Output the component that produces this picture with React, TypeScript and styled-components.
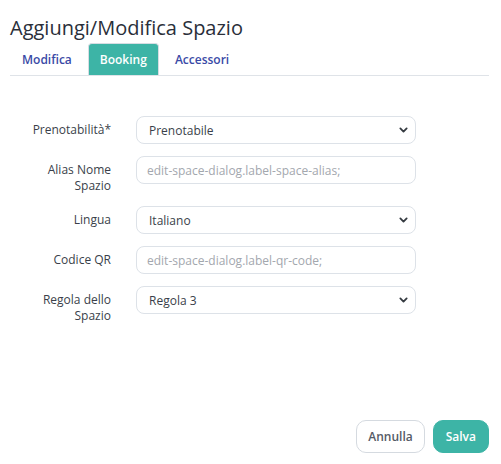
import React from "react";
import styled, { createGlobalStyle } from "styled-components";

const GlobalStyle = createGlobalStyle`
  body {
    margin: 0;
    background: #ffffff;
    font-family: "Open Sans", "Noto Sans", sans-serif;
  }
`;

const Dialog = styled.div`
  height: 464px;
  box-sizing: border-box;
  padding: 14px 12px 11px 10px;
  display: flex;
  flex-direction: column;
`;

const Title = styled.h1`
  margin: 0;
  font-size: 20px;
  line-height: 28px;
  font-weight: 500;
  color: #2a2f3a;
`;

const TabBar = styled.div`
  display: flex;
  gap: 4px;
  padding-left: 0;
  margin-top: 1px;
  border-bottom: 1px solid #dfe3e8;
`;

const Tab = styled.button<{ $active?: boolean }>`
  height: 32px;
  padding: 0 11px;
  border: 1px solid ${p => (p.$active ? "#d7dde3" : "transparent")};
  border-bottom: none;
  border-radius: 4px 4px 0 0;
  background: ${p => (p.$active ? "#3db4a6" : "transparent")};
  color: ${p => (p.$active ? "#ffffff" : "#3a4aa6")};
  font-family: inherit;
  font-size: 12px;
  font-weight: 600;
  cursor: pointer;
`;

const Form = styled.div`
  display: flex;
  flex-direction: column;
  gap: 12px;
  margin-top: 40px;
`;

const Row = styled.div`
  display: grid;
  grid-template-columns: 101px 280px;
  column-gap: 25px;
  align-items: start;
`;

const Label = styled.label`
  padding-top: 6px;
  text-align: right;
  font-size: 12px;
  line-height: 16px;
  color: #3a3f4a;
`;

const fieldBase = `
  width: 100%;
  height: 28px;
  box-sizing: border-box;
  border: 1px solid #dde2e8;
  border-radius: 8px;
  background: #ffffff;
  padding: 0 12px;
  font-family: inherit;
  font-size: 12px;
  color: #3a3f4a;
  outline: none;
`;

const Input = styled.input`
  ${fieldBase}
  padding-left: 10px;
  &::placeholder {
    color: #a3a7ae;
  }
`;

const SelectWrap = styled.div`
  position: relative;
`;

const Select = styled.select`
  ${fieldBase}
  appearance: none;
`;

const Chevron = styled.svg`
  position: absolute;
  right: 8px;
  top: 10px;
  width: 9px;
  height: 8px;
  pointer-events: none;
`;

const Footer = styled.div`
  margin-top: auto;
  display: flex;
  justify-content: flex-end;
  gap: 8px;
`;

const Button = styled.button<{ $primary?: boolean }>`
  height: 33px;
  padding: 0 ${p => (p.$primary ? "12px" : "11px")};
  border-radius: 10px;
  border: 1px solid ${p => (p.$primary ? "#3db4a6" : "#d5dae0")};
  background: ${p => (p.$primary ? "#3db4a6" : "#ffffff")};
  color: ${p => (p.$primary ? "#ffffff" : "#555b66")};
  font-family: inherit;
  font-size: 12px;
  font-weight: 600;
  cursor: pointer;
`;

const SelectField: React.FC<{ value: string; options: string[] }> = ({ value, options }) => (
  <SelectWrap>
    <Select defaultValue={value}>
      {options.map(o => (
        <option key={o}>{o}</option>
      ))}
    </Select>
    <Chevron viewBox="0 0 10 8">
      <path d="M1.5 2.2 5 5.7 8.5 2.2" fill="none" stroke="#343a40" strokeWidth="2" strokeLinecap="round" strokeLinejoin="round" />
    </Chevron>
  </SelectWrap>
);

const App: React.FC = () => {
  return (
    <Dialog>
      <GlobalStyle />
      <Title>Aggiungi/Modifica Spazio</Title>
      <TabBar>
        <Tab>Modifica</Tab>
        <Tab $active>Booking</Tab>
        <Tab>Accessori</Tab>
      </TabBar>
      <Form>
        <Row>
          <Label>Prenotabilità*</Label>
          <SelectField value="Prenotabile" options={["Prenotabile", "Non prenotabile"]} />
        </Row>
        <Row>
          <Label>
            Alias Nome
            <br />
            Spazio
          </Label>
          <Input placeholder="edit-space-dialog.label-space-alias;" />
        </Row>
        <Row>
          <Label>Lingua</Label>
          <SelectField value="Italiano" options={["Italiano", "English"]} />
        </Row>
        <Row>
          <Label>Codice QR</Label>
          <Input placeholder="edit-space-dialog.label-qr-code;" />
        </Row>
        <Row>
          <Label>
            Regola dello
            <br />
            Spazio
          </Label>
          <SelectField value="Regola 3" options={["Regola 1", "Regola 2", "Regola 3"]} />
        </Row>
      </Form>
      <Footer>
        <Button>Annulla</Button>
        <Button $primary>Salva</Button>
      </Footer>
    </Dialog>
  );
};

export default App;
